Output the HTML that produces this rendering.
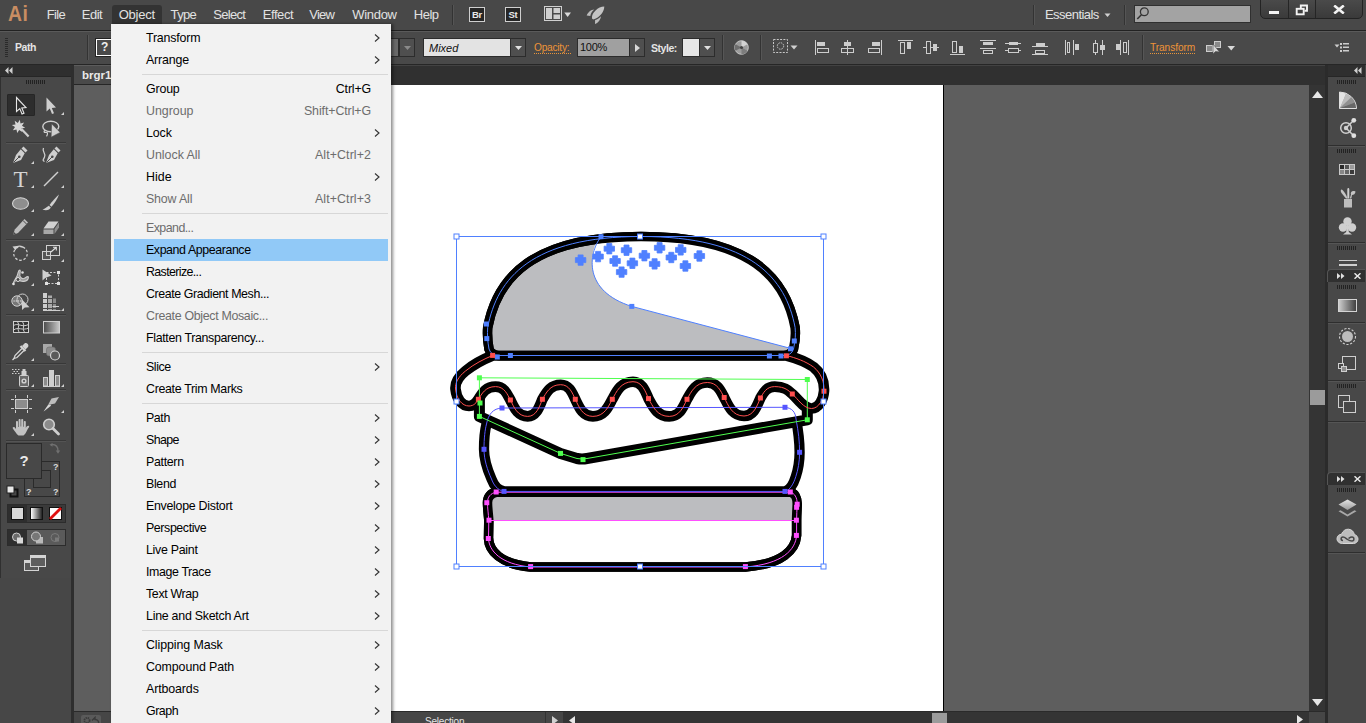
<!DOCTYPE html>
<html lang="en">
<head>
<meta charset="utf-8">
<title>brgr1 - Illustrator</title>
<style>
*{box-sizing:border-box;margin:0;padding:0}
html,body{width:1366px;height:723px;overflow:hidden;background:#5e5e5e}
body{position:relative;font-family:"Liberation Sans",sans-serif;font-size:12px;color:#e0e0e0}
.abs{position:absolute}
#menubar{left:0;top:0;width:1366px;height:30px;background:#484848}
#menubar .mi{position:absolute;top:7px;font-size:13px;color:#e2e2e2;white-space:nowrap;line-height:16px}
#ctrl{left:0;top:30px;width:1366px;height:35px;background:#494949;border-top:1px solid #222;border-bottom:1px solid #262626;box-shadow:inset 0 1px 0 #5a5a5a}
#tabbar{left:71px;top:65px;width:1257px;height:20px;background:#303030;border-top:1px solid #424242}
#tab{left:74px;top:65px;width:150px;height:20px;background:#4a4a4a;border-top:1px solid #5c5c5c;border-bottom:1px solid #262626;font-weight:bold;font-size:11.5px;color:#e8e8e8;line-height:19px;padding-left:8px}
#tools{left:0;top:65px;width:74px;height:658px;background:#484848;border-right:3px solid #2e2e2e;box-shadow:inset 1px 0 0 #303030}
#canvas{left:74px;top:85px;width:1235px;height:626px;background:#5e5e5e}
#artboard{left:391px;top:85px;width:553px;height:626px;background:#fff;border-right:1px solid #000}
#vscroll{left:1309px;top:85px;width:16px;height:626px;background:#343434}
#status{left:74px;top:711px;width:1251px;height:12px;background:#464646;border-top:1px solid #2a2a2a}
#dock{left:1325px;top:65px;width:41px;height:658px;background:#484848;border-left:3px solid #2b2b2b}
.appbox{top:7px;width:16px;height:15px;background:#262626;border:1px solid #cfcfcf;color:#e8e8e8;font-weight:bold;font-size:9.500px;line-height:13px;text-align:center;letter-spacing:-0.3px}
.vsep{top:4px;width:2px;height:25px;border-left:1px solid #333;border-right:1px solid #565656}
.ddb{height:19px;background:#4f4f4f;border:1px solid #2c2c2c;display:flex;align-items:center;justify-content:center}
.olink{font-size:10.200px;color:#ee9438;line-height:13px;height:13px;border-bottom:1px dotted #e8943a;white-space:nowrap;letter-spacing:-0.1px}
.q{color:#d8d8d8;font-weight:bold;font-size:9px;line-height:9px}
/* menu */
#menu{left:111px;top:24px;width:280px;height:699px;background:#f2f2f2;border-left:1px solid #f0f0f0;box-shadow:2px 0 3px rgba(0,0,0,.45);color:#000;font-size:12.4px}
#menu .it{position:absolute;left:2px;width:274px;height:22px;line-height:23px;padding-left:32px;white-space:nowrap}
#menu .it.dis{color:#6d6d6d}
#menu .it.hl{background:#91c9f7}
#menu .sc{position:absolute;right:17px;top:0}
#menu .ar{position:absolute;right:8px;top:6px;width:6px;height:10px}
#menu .sep{position:absolute;left:30px;width:246px;height:1px;background:#d7d7d7}
</style>
</head>
<body>
<!-- MENUBAR -->
<div id="menubar" class="abs">
  <div class="abs" style="left:8px;top:1px;font-size:22px;font-weight:bold;color:#c98d62;letter-spacing:0.6px;line-height:26px;transform:scaleX(0.88);transform-origin:0 0">Ai</div>
  <div class="abs" style="left:112px;top:5px;width:50px;height:20px;background:#333;border-radius:3px 3px 0 0"></div>
  <div class="mi" style="left:46.7px;letter-spacing:-0.61px">File</div>
  <div class="mi" style="left:81.8px;letter-spacing:-0.50px">Edit</div>
  <div class="mi" style="left:118.7px;letter-spacing:-0.23px">Object</div>
  <div class="mi" style="left:170.6px;letter-spacing:-0.65px">Type</div>
  <div class="mi" style="left:213.2px;letter-spacing:-0.69px">Select</div>
  <div class="mi" style="left:262.7px;letter-spacing:-0.42px">Effect</div>
  <div class="mi" style="left:309.2px;letter-spacing:-0.74px">View</div>
  <div class="mi" style="left:352.2px;letter-spacing:-0.29px">Window</div>
  <div class="mi" style="left:413.7px;letter-spacing:-0.44px">Help</div>

  <div class="abs" style="left:452px;top:5px;width:1px;height:20px;background:#333"></div>
  <div class="abs" style="left:453px;top:5px;width:1px;height:20px;background:#555"></div>
  <div class="abs appbox" style="left:469px">Br</div>
  <div class="abs appbox" style="left:505px">St</div>
  <svg class="abs" style="left:544px;top:6px" width="28" height="15" viewBox="0 0 28 15">
    <rect x="0.5" y="0.5" width="17" height="14" fill="#4a4a4a" stroke="#d0d0d0"/>
    <rect x="2" y="2" width="6" height="11" fill="#cfcfcf"/><rect x="9.5" y="2" width="6.5" height="5" fill="#cfcfcf"/><rect x="9.5" y="8.5" width="6.5" height="4.5" fill="#cfcfcf"/>
    <path d="M20.3 6.5 H27 L23.65 11 Z" fill="#d8d8d8"/>
  </svg>
  <svg class="abs" style="left:586px;top:5px" width="20" height="20" viewBox="0 0 20 20">
    <path d="M18.300 1.500 C12 1.500 5.500 8 6 13 C6.200 14.400 7.200 14.600 8 14.300 C13 12.500 18.200 7.500 18.300 1.500Z" fill="#c4c4c4"/>
    <path d="M8.300 4.600 C5 4.800 2 7.300 0.700 10.600 L4.300 10.900 C4.800 8.500 6.300 6.200 8.300 4.600Z" fill="#bcbcbc"/>
    <path d="M14.900 11.200 C14.900 14 12.500 17.600 9 19 L9.100 15.100 C11.500 14.300 13.500 12.800 14.900 11.200Z" fill="#bcbcbc"/>
  </svg>
  <div class="abs" style="left:1033px;top:5px;width:1px;height:20px;background:#333"></div>
  <div class="abs" style="left:1034px;top:5px;width:1px;height:20px;background:#555"></div>
  <div class="mi" style="left:1045px;letter-spacing:-0.550px">Essentials</div>
  <svg class="abs" style="left:1104px;top:13px" width="7" height="4" viewBox="0 0 7 4"><path d="M0.500 0.500H6.500L3.500 4Z" fill="#d0d0d0"/></svg>
  <div class="abs" style="left:1124px;top:5px;width:1px;height:20px;background:#333"></div>
  <div class="abs" style="left:1125px;top:5px;width:1px;height:20px;background:#555"></div>
  <div class="abs" style="left:1134px;top:5px;width:117px;height:18px;background:#a3a3a3;border:1px solid #303030"></div>
  <svg class="abs" style="left:1136px;top:6px" width="14" height="15" viewBox="0 0 14 15"><circle cx="8.300" cy="5.800" r="3.900" fill="none" stroke="#333" stroke-width="1.300"/><path d="M5.400 8.800 L1.300 13" stroke="#333" stroke-width="1.600"/></svg>
  <div class="abs" style="left:1260px;top:-1px;width:103px;height:20px;background:linear-gradient(#4a4a4a,#3a3a3a);border:1px solid #232323;border-radius:0 0 5px 5px"></div>
  <div class="abs" style="left:1288px;top:0;width:1px;height:18px;background:#252525"></div>
  <div class="abs" style="left:1315px;top:0;width:1px;height:18px;background:#252525"></div>
  <div class="abs" style="left:1269px;top:11px;width:10px;height:3px;background:#f2f2f2"></div>
  <svg class="abs" style="left:1295px;top:4px" width="14" height="12" viewBox="0 0 14 12">
    <path d="M5.800 4 V1.500 H12 V6.800 H9.500" fill="none" stroke="#f2f2f2" stroke-width="1.900"/>
    <rect x="1.700" y="4.800" width="7" height="5.500" fill="none" stroke="#f2f2f2" stroke-width="1.900"/>
  </svg>
  <svg class="abs" style="left:1333px;top:5px" width="12" height="9" viewBox="0 0 12 9"><path d="M1.200 0.500 L10.800 8.500 M10.800 0.500 L1.200 8.500" stroke="#f2f2f2" stroke-width="2.600"/></svg>

</div>
<!-- CONTROL BAR -->
<div id="ctrl" class="abs">
  <div class="abs" style="left:5px;top:7px;width:3px;height:20px;background:repeating-linear-gradient(#2a2a2a 0 1px,transparent 1px 2px)"></div>
  <div class="abs" style="left:15px;top:9px;font-weight:bold;font-size:10.5px;color:#e4e4e4;line-height:14px;letter-spacing:-0.45px">Path</div>
  <div class="abs vsep" style="left:87px"></div>
  <div class="abs" style="left:96px;top:8px;width:30px;height:17px;border:1px solid #fff;outline:1px solid #222;background:#4a4a4a;color:#eee;font-weight:bold;font-size:12px;line-height:15px;padding-left:4px">?</div>
  <div class="abs" style="left:380px;top:7px;width:19px;height:19px;background:#6a6a6a;border:1px solid #2c2c2c"></div>
  <div class="abs ddb" style="left:399px;top:7px;width:16px"><svg width="7" height="4" viewBox="0 0 7 4"><path d="M0 0H7L3.500 4Z" fill="#8a8a8a"/></svg></div>
  <div class="abs" style="left:423px;top:7px;width:88px;height:19px;background:#e3e3e3;border:1px solid #2c2c2c;color:#111;font-style:italic;font-size:11px;line-height:18px;padding-left:5px">Mixed</div>
  <div class="abs ddb" style="left:510px;top:7px;width:16px"><svg width="7" height="4" viewBox="0 0 7 4"><path d="M0 0H7L3.500 4Z" fill="#e0e0e0"/></svg></div>
  <div class="abs olink" style="left:534px;top:10px;width:37px;letter-spacing:-0.25px">Opacity:</div>
  <div class="abs" style="left:577px;top:7px;width:53px;height:19px;background:#a0a0a0;border:1px solid #2c2c2c;color:#111;font-size:11px;line-height:17px;padding-left:2px;letter-spacing:-0.3px">100%</div>
  <div class="abs ddb" style="left:629px;top:7px;width:16px"><svg width="5" height="8" viewBox="0 0 5 8"><path d="M0 0V8L5 4Z" fill="#d8d8d8"/></svg></div>
  <div class="abs" style="left:651px;top:10px;font-weight:bold;font-size:10.5px;color:#e4e4e4;line-height:14px;letter-spacing:-0.45px">Style:</div>
  <div class="abs" style="left:682px;top:7px;width:18px;height:19px;background:#e6e6e6;border:1px solid #2c2c2c"></div>
  <div class="abs ddb" style="left:699px;top:7px;width:16px"><svg width="7" height="4" viewBox="0 0 7 4"><path d="M0 0H7L3.500 4Z" fill="#e0e0e0"/></svg></div>
  <div class="abs vsep" style="left:722px"></div>
  <svg class="abs" style="left:734px;top:9px" width="15" height="15" viewBox="0 0 15 15"><circle cx="7.500" cy="7.500" r="6.800" fill="#9c9c9c" stroke="#c8c8c8" stroke-width="1"/><path d="M7.500 7.500 L7.500 0.700 A6.800 6.800 0 0 1 13.500 4.200Z" fill="#d4d4d4"/><path d="M7.500 7.500 L1.500 4.200 A6.800 6.800 0 0 0 1.500 10.800Z" fill="#6e6e6e"/><path d="M7.500 7.500 L7.500 14.300 A6.800 6.800 0 0 0 13.500 10.800Z" fill="#7d7d7d"/><circle cx="7.500" cy="7.500" r="1.600" fill="#444"/></svg>
  <div class="abs vsep" style="left:760px"></div>
  <svg class="abs" style="left:773px;top:8px" width="26" height="15" viewBox="0 0 26 15"><rect x="0.500" y="0.500" width="14" height="13" fill="none" stroke="#c8c8c8" stroke-width="1" stroke-dasharray="2 1.300"/><circle cx="7.500" cy="7" r="3.200" fill="none" stroke="#c8c8c8" stroke-width="1" stroke-dasharray="1.500 1"/><path d="M17.500 6.500H24.500L21 10.500Z" fill="#d0d0d0"/></svg>
  <svg class="abs" style="left:815px;top:9px" width="14" height="15" viewBox="0 0 14 15"><path d="M0.5 0L0.5 15" stroke="#cdcdcd" stroke-width="1"/><rect x="2" y="2" width="8" height="4" fill="#cdcdcd"/><rect x="2.5" y="8.5" width="11" height="4" fill="none" stroke="#cdcdcd"/></svg>
  <svg class="abs" style="left:841px;top:9px" width="13" height="15" viewBox="0 0 13 15"><path d="M6.5 0L6.5 15" stroke="#cdcdcd" stroke-width="1"/><rect x="3" y="2" width="7" height="4" fill="#cdcdcd"/><rect x="0.5" y="8.5" width="12" height="4" fill="none" stroke="#cdcdcd"/></svg>
  <svg class="abs" style="left:868px;top:9px" width="14" height="15" viewBox="0 0 14 15"><path d="M13.5 0L13.5 15" stroke="#cdcdcd" stroke-width="1"/><rect x="4" y="2" width="8" height="4" fill="#cdcdcd"/><rect x="0.5" y="8.5" width="11" height="4" fill="none" stroke="#cdcdcd"/></svg>
  <svg class="abs" style="left:898px;top:9px" width="15" height="15" viewBox="0 0 15 15"><path d="M0 0.5L15 0.5" stroke="#cdcdcd" stroke-width="1"/><rect x="2.5" y="2.5" width="4" height="11" fill="none" stroke="#cdcdcd"/><rect x="9" y="2" width="4" height="7" fill="#cdcdcd"/></svg>
  <svg class="abs" style="left:923px;top:9px" width="16" height="15" viewBox="0 0 16 15"><path d="M0 7.5L16 7.5" stroke="#cdcdcd" stroke-width="1"/><rect x="3.500" y="1.500" width="4" height="12" fill="#474747" stroke="#cdcdcd"/><rect x="10" y="4" width="4" height="7" fill="#cdcdcd"/></svg>
  <svg class="abs" style="left:950px;top:9px" width="15" height="15" viewBox="0 0 15 15"><path d="M0 14.5L15 14.5" stroke="#cdcdcd" stroke-width="1"/><rect x="2.5" y="1.5" width="4" height="11" fill="none" stroke="#cdcdcd"/><rect x="9" y="6" width="4" height="7" fill="#cdcdcd"/></svg>
  <svg class="abs" style="left:980px;top:9px" width="16" height="15" viewBox="0 0 16 15"><path d="M0 0.5L16 0.5" stroke="#cdcdcd" stroke-width="1"/><rect x="3" y="2" width="10" height="3" fill="#cdcdcd"/><path d="M0 8.5L16 8.5" stroke="#cdcdcd" stroke-width="1"/><rect x="3.5" y="10.5" width="9" height="3" fill="none" stroke="#cdcdcd"/></svg>
  <svg class="abs" style="left:1005px;top:9px" width="16" height="15" viewBox="0 0 16 15"><path d="M0 3.5L16 3.5" stroke="#cdcdcd" stroke-width="1"/><rect x="4" y="2" width="9" height="3" fill="#cdcdcd"/><path d="M0 10.5L16 10.5" stroke="#cdcdcd" stroke-width="1"/><rect x="3.500" y="8.500" width="10" height="4" fill="#474747" stroke="#cdcdcd"/></svg>
  <svg class="abs" style="left:1032px;top:9px" width="16" height="15" viewBox="0 0 16 15"><path d="M0 6.5L16 6.5" stroke="#cdcdcd" stroke-width="1"/><rect x="4" y="3" width="9" height="3" fill="#cdcdcd"/><path d="M0 14.5L16 14.5" stroke="#cdcdcd" stroke-width="1"/><rect x="3.5" y="10.5" width="9" height="3" fill="none" stroke="#cdcdcd"/></svg>
  <svg class="abs" style="left:1065px;top:9px" width="14" height="15" viewBox="0 0 14 15"><path d="M0.5 0L0.5 15" stroke="#cdcdcd" stroke-width="1"/><rect x="2.5" y="2.5" width="2" height="10" fill="none" stroke="#cdcdcd"/><path d="M8.5 0L8.5 15" stroke="#cdcdcd" stroke-width="1"/><rect x="10" y="4" width="4" height="6" fill="#cdcdcd"/></svg>
  <svg class="abs" style="left:1092px;top:9px" width="14" height="15" viewBox="0 0 14 15"><path d="M3.5 0L3.5 15" stroke="#cdcdcd" stroke-width="1"/><rect x="1.500" y="3.500" width="4" height="9" fill="#474747" stroke="#cdcdcd"/><path d="M10.5 0L10.5 15" stroke="#cdcdcd" stroke-width="1"/><rect x="8" y="5" width="5" height="5" fill="#cdcdcd"/></svg>
  <svg class="abs" style="left:1115px;top:9px" width="14" height="15" viewBox="0 0 14 15"><path d="M5.5 0L5.5 15" stroke="#cdcdcd" stroke-width="1"/><rect x="1" y="4" width="4" height="6" fill="#cdcdcd"/><path d="M13.5 0L13.5 15" stroke="#cdcdcd" stroke-width="1"/><rect x="8.5" y="2.5" width="3" height="10" fill="none" stroke="#cdcdcd"/></svg>
  <div class="abs vsep" style="left:1142px"></div>
  <div class="abs olink" style="left:1150px;top:10px;width:45px">Transform</div>
  <svg class="abs" style="left:1205px;top:9px" width="31" height="15" viewBox="0 0 31 15"><rect x="1.500" y="5.500" width="6" height="6" fill="#8a8a8a" stroke="#cdcdcd"/><rect x="9.500" y="1.500" width="6" height="6" fill="#8a8a8a" stroke="#cdcdcd"/><path d="M8 4 L8 14 L10.500 11.500 L14.500 12 Z" fill="#d8d8d8" stroke="#474747" stroke-width="0.600"/><path d="M22.500 6H30L26.250 10.500Z" fill="#d8d8d8"/></svg>
  <svg class="abs" style="left:1334px;top:11px" width="16" height="11" viewBox="0 0 16 11"><path d="M0.500 2.500H5.500L3 5.500Z" fill="#cdcdcd"/><rect x="6" y="1" width="2" height="2" fill="#cdcdcd"/><rect x="9" y="1" width="6" height="1.500" fill="#cdcdcd"/><rect x="6" y="4.500" width="2" height="2" fill="#cdcdcd"/><rect x="9" y="4.500" width="6" height="1.500" fill="#cdcdcd"/><rect x="6" y="8" width="2" height="2" fill="#cdcdcd"/><rect x="9" y="8" width="6" height="1.500" fill="#cdcdcd"/></svg>
</div>
<div id="tabbar" class="abs"></div>
<div id="tab" class="abs">brgr1</div>
<div id="canvas" class="abs"></div>
<div id="artboard" class="abs"></div>
<!--ART-->
<svg class="abs" style="left:0;top:0" width="1366" height="723" viewBox="0 0 1366 723">
<defs><clipPath id="cd"><path d="M489 349 C487.500 341 487.200 334 487.700 327.500 C497 278 532 236.500 641 236.500 C750.800 236.500 785.800 278 795.100 327.500 C795.800 334 795.300 341 793.500 349 Q791.500 355.500 783.500 355.500 L499 355.500 Q491 355.500 489 349 Z"/></clipPath><clipPath id="cb"><path d="M496.200 492.200 L790.300 492.200 C794.500 493.200 797.300 497.500 797.200 504.200 C797 510 796.600 515 796.600 520.200 L796.600 535.400 C795.500 549.500 783 564 745.400 567 L530.600 567 C500 564 489 550.500 488.500 538.500 L488.800 520.200 C488.400 514 487.500 508 487.500 502.700 C487.500 497 490.500 493.200 496.200 492.200 Z"/></clipPath></defs>
<path d="M496.200 492.200 L790.300 492.200 C794.500 493.200 797.300 497.500 797.200 504.200 C797 510 796.600 515 796.600 520.200 L796.600 535.400 C795.500 549.500 783 564 745.400 567 L530.600 567 C500 564 489 550.500 488.500 538.500 L488.800 520.200 C488.400 514 487.500 508 487.500 502.700 C487.500 497 490.500 493.200 496.200 492.200 Z" fill="#fff" stroke="#000" stroke-width="9.5" stroke-linejoin="round"/>
<rect x="480" y="485" width="330" height="35.800" fill="#bcbdc0" clip-path="url(#cb)"/>
<path d="M496.200 492.200 L790.300 492.200 C794.500 493.200 797.300 497.500 797.200 504.200 C797 510 796.600 515 796.600 520.200 L796.600 535.400 C795.500 549.500 783 564 745.400 567 L530.600 567 C500 564 489 550.500 488.500 538.500 L488.800 520.200 C488.400 514 487.500 508 487.500 502.700 C487.500 497 490.500 493.200 496.200 492.200 Z" fill="none" stroke="#000" stroke-width="9.5" stroke-linejoin="round"/>
<path d="M502 408 L785 407.300 C792 408 795.500 412 796 419 C798.500 432 799.600 442 799.600 452.300 C799.600 462 798 470 795.800 476.600 C793.500 484 790 490 785 491.400 L504 491.400 C497 490 493.500 484.500 491.500 479 C487.500 470 484 460 484 449.300 C484 438 485 430 486.500 424 C488.500 414 493 408.500 502 408 Z" fill="#fff" stroke="#000" stroke-width="10.300" stroke-linejoin="round"/>
<path d="M479.400 377.800 L807.300 379.500 L807.300 419.800 L587 458.500 Q582 459.500 577 458.500 L560.500 453.400 L479.400 416.400 Z" fill="#fff" stroke="#000" stroke-width="11" stroke-linejoin="round"/>
<path d="M492.600 355.500 C484 359 474 364 465.500 371 C458 377 455 383 455.500 389 C456.500 399 462 406 469 406 C474 406 476.500 402.500 478.400 399.300 C481.8 394.0 485.2 386.6 495.5 386.6 C504.4 386.6 507.4 394.4 510.4 400 C513.9 406.9 517.3 416.4 527.7 416.4 C536.5 416.4 539.5 406.5 542.4 399.3 C546.1 393.2 549.7 384.7 560.7 384.7 C569.5 384.7 572.4 393.2 575.3 399.3 C578.8 406.5 582.3 416.4 592.9 416.4 C604.5 416.4 608.4 406.5 612.3 399.3 C616.4 391.9 620.6 381.7 633 381.7 C642.3 381.7 645.4 391.5 648.5 398.6 C652.7 406.1 656.8 416.4 669.3 416.4 C679.9 416.4 683.5 406.5 687 399.3 C691.1 392.2 695.1 382.5 707.3 382.5 C717.4 382.5 720.8 391.2 724.2 397.5 C728.2 405.3 732.1 416.0 744 416 C753.8 416.0 757.1 405.6 760.4 398 C763.3 393.2 766.1 386.6 774.7 386.6 C785.3 386.6 788.8 390.9 792.3 394 C798 399 803.500 408.500 811.500 408.500 C819 408.500 823.500 399 824 391.200 C824.500 382 821 373 813.500 367 C805 361 796 358 786.400 355.500 Z" fill="#fff" stroke="#000" stroke-width="10.600" stroke-linejoin="round"/>
<path d="M489 349 C487.500 341 487.200 334 487.700 327.500 C497 278 532 236.500 641 236.500 C750.800 236.500 785.800 278 795.100 327.500 C795.800 334 795.300 341 793.500 349 Q791.500 355.500 783.500 355.500 L499 355.500 Q491 355.500 489 349 Z" fill="#bcbdc0" stroke="#000" stroke-width="9.5" stroke-linejoin="round"/>
<path d="M601 232 C588 254 583 291 631.800 306.400 L793 349 L810 349 L810 225 Z" fill="#fff" clip-path="url(#cd)"/>
<path d="M489 349 C487.500 341 487.200 334 487.700 327.500 C497 278 532 236.500 641 236.500 C750.800 236.500 785.800 278 795.100 327.500 C795.800 334 795.300 341 793.500 349 Q791.500 355.500 783.500 355.500 L499 355.500 Q491 355.500 489 349 Z" fill="none" stroke="#000" stroke-width="9.5" stroke-linejoin="round"/>
<path d="M496.200 492.200 L790.300 492.200 C794.500 493.200 797.300 497.500 797.200 504.200 C797 510 796.600 515 796.600 520.200 L796.600 535.400 C795.500 549.500 783 564 745.400 567 L530.600 567 C500 564 489 550.500 488.500 538.500 L488.800 520.200 C488.400 514 487.500 508 487.500 502.700 C487.500 497 490.500 493.200 496.200 492.200 Z" fill="none" stroke="#ff4fff" stroke-width="1"/><path d="M489 520.500 H796.400" stroke="#ff4fff" stroke-width="1"/>
<path d="M502 408 L785 407.300 C792 408 795.500 412 796 419 C798.500 432 799.600 442 799.600 452.300 C799.600 462 798 470 795.800 476.600 C793.500 484 790 490 785 491.400 L504 491.400 C497 490 493.500 484.500 491.500 479 C487.500 470 484 460 484 449.300 C484 438 485 430 486.500 424 C488.500 414 493 408.500 502 408 Z" fill="none" stroke="#5555ff" stroke-width="1"/>
<path d="M479.400 377.800 L807.300 379.500 L807.300 419.800 L587 458.500 Q582 459.500 577 458.500 L560.500 453.400 L479.400 416.400 Z" fill="none" stroke="#4fff4f" stroke-width="1"/>
<path d="M492.600 355.500 C484 359 474 364 465.500 371 C458 377 455 383 455.500 389 C456.500 399 462 406 469 406 C474 406 476.500 402.500 478.400 399.300 C481.8 394.0 485.2 386.6 495.5 386.6 C504.4 386.6 507.4 394.4 510.4 400 C513.9 406.9 517.3 416.4 527.7 416.4 C536.5 416.4 539.5 406.5 542.4 399.3 C546.1 393.2 549.7 384.7 560.7 384.7 C569.5 384.7 572.4 393.2 575.3 399.3 C578.8 406.5 582.3 416.4 592.9 416.4 C604.5 416.4 608.4 406.5 612.3 399.3 C616.4 391.9 620.6 381.7 633 381.7 C642.3 381.7 645.4 391.5 648.5 398.6 C652.7 406.1 656.8 416.4 669.3 416.4 C679.9 416.4 683.5 406.5 687 399.3 C691.1 392.2 695.1 382.5 707.3 382.5 C717.4 382.5 720.8 391.2 724.2 397.5 C728.2 405.3 732.1 416.0 744 416 C753.8 416.0 757.1 405.6 760.4 398 C763.3 393.2 766.1 386.6 774.7 386.6 C785.3 386.6 788.8 390.9 792.3 394 C798 399 803.500 408.500 811.500 408.500 C819 408.500 823.500 399 824 391.200 C824.500 382 821 373 813.500 367 C805 361 796 358 786.400 355.500 Z" fill="none" stroke="#ff4f4f" stroke-width="1"/>
<path d="M489 349 C487.500 341 487.200 334 487.700 327.500 C497 278 532 236.500 641 236.500 C750.800 236.500 785.800 278 795.100 327.500 C795.800 334 795.300 341 793.500 349 Q791.500 355.500 783.500 355.500 L499 355.500 Q491 355.500 489 349 Z" fill="none" stroke="#4f80ff" stroke-width="1"/>
<path d="M601 236.700 C588 254 583 291 631.800 306.400 L791 348.500" fill="none" stroke="#4f80ff" stroke-width="1"/>
<path d="M578.1 254.9h5v2.700h2.700v5h-2.700v2.700h-5v-2.700h-2.700v-5h2.700z" fill="#4f80ff" stroke="#4f80ff" stroke-width="0.800" stroke-linejoin="round"/>
<path d="M595.6 251.4h5v2.700h2.700v5h-2.700v2.700h-5v-2.700h-2.700v-5h2.700z" fill="#4f80ff" stroke="#4f80ff" stroke-width="0.800" stroke-linejoin="round"/>
<path d="M606.8 243.5h5v2.700h2.700v5h-2.700v2.700h-5v-2.700h-2.700v-5h2.700z" fill="#4f80ff" stroke="#4f80ff" stroke-width="0.800" stroke-linejoin="round"/>
<path d="M612.6 255.8h5v2.700h2.700v5h-2.700v2.700h-5v-2.700h-2.700v-5h2.700z" fill="#4f80ff" stroke="#4f80ff" stroke-width="0.800" stroke-linejoin="round"/>
<path d="M619.1 266.9h5v2.700h2.700v5h-2.700v2.700h-5v-2.700h-2.700v-5h2.700z" fill="#4f80ff" stroke="#4f80ff" stroke-width="0.800" stroke-linejoin="round"/>
<path d="M624.0 245.0h5v2.700h2.700v5h-2.700v2.700h-5v-2.700h-2.700v-5h2.700z" fill="#4f80ff" stroke="#4f80ff" stroke-width="0.800" stroke-linejoin="round"/>
<path d="M629.9 258.1h5v2.700h2.700v5h-2.700v2.700h-5v-2.700h-2.700v-5h2.700z" fill="#4f80ff" stroke="#4f80ff" stroke-width="0.800" stroke-linejoin="round"/>
<path d="M641.9 250.5h5v2.700h2.700v5h-2.700v2.700h-5v-2.700h-2.700v-5h2.700z" fill="#4f80ff" stroke="#4f80ff" stroke-width="0.800" stroke-linejoin="round"/>
<path d="M652.1 258.7h5v2.700h2.700v5h-2.700v2.700h-5v-2.700h-2.700v-5h2.700z" fill="#4f80ff" stroke="#4f80ff" stroke-width="0.800" stroke-linejoin="round"/>
<path d="M657.1 242.6h5v2.700h2.700v5h-2.700v2.700h-5v-2.700h-2.700v-5h2.700z" fill="#4f80ff" stroke="#4f80ff" stroke-width="0.800" stroke-linejoin="round"/>
<path d="M668.8 252.3h5v2.700h2.700v5h-2.700v2.700h-5v-2.700h-2.700v-5h2.700z" fill="#4f80ff" stroke="#4f80ff" stroke-width="0.800" stroke-linejoin="round"/>
<path d="M678.2 244.7h5v2.700h2.700v5h-2.700v2.700h-5v-2.700h-2.700v-5h2.700z" fill="#4f80ff" stroke="#4f80ff" stroke-width="0.800" stroke-linejoin="round"/>
<path d="M682.9 260.8h5v2.700h2.700v5h-2.700v2.700h-5v-2.700h-2.700v-5h2.700z" fill="#4f80ff" stroke="#4f80ff" stroke-width="0.800" stroke-linejoin="round"/>
<path d="M696.9 250.8h5v2.700h2.700v5h-2.700v2.700h-5v-2.700h-2.700v-5h2.700z" fill="#4f80ff" stroke="#4f80ff" stroke-width="0.800" stroke-linejoin="round"/>
<rect x="494.8" y="354.5" width="5" height="5" fill="#4f80ff"/>
<rect x="507.9" y="353.0" width="5" height="5" fill="#4f80ff"/>
<rect x="483.8" y="321.5" width="5" height="5" fill="#4f80ff"/>
<rect x="484.3" y="336.1" width="5" height="5" fill="#4f80ff"/>
<rect x="598.5" y="234.2" width="5" height="5" fill="#4f80ff"/>
<rect x="791.8" y="338.5" width="5" height="5" fill="#4f80ff"/>
<rect x="788.0" y="346.3" width="5" height="5" fill="#4f80ff"/>
<rect x="766.9" y="353.5" width="5" height="5" fill="#4f80ff"/>
<rect x="778.5" y="353.5" width="5" height="5" fill="#4f80ff"/>
<rect x="629.3" y="303.9" width="5" height="5" fill="#4f80ff"/>
<rect x="490.1" y="352.9" width="5" height="5" fill="#ff4f4f"/>
<rect x="475.9" y="396.8" width="5" height="5" fill="#ff4f4f"/>
<rect x="507.9" y="397.5" width="5" height="5" fill="#ff4f4f"/>
<rect x="539.9" y="396.8" width="5" height="5" fill="#ff4f4f"/>
<rect x="572.8" y="396.8" width="5" height="5" fill="#ff4f4f"/>
<rect x="609.8" y="396.8" width="5" height="5" fill="#ff4f4f"/>
<rect x="646.0" y="396.1" width="5" height="5" fill="#ff4f4f"/>
<rect x="684.5" y="396.8" width="5" height="5" fill="#ff4f4f"/>
<rect x="721.7" y="395.0" width="5" height="5" fill="#ff4f4f"/>
<rect x="757.9" y="395.5" width="5" height="5" fill="#ff4f4f"/>
<rect x="789.8" y="391.5" width="5" height="5" fill="#ff4f4f"/>
<rect x="821.5" y="388.7" width="5" height="5" fill="#ff4f4f"/>
<rect x="783.9" y="353.3" width="5" height="5" fill="#ff4f4f"/>
<rect x="476.9" y="375.3" width="5" height="5" fill="#4fff4f"/>
<rect x="804.8" y="377.0" width="5" height="5" fill="#4fff4f"/>
<rect x="804.8" y="417.3" width="5" height="5" fill="#4fff4f"/>
<rect x="580.5" y="457.1" width="5" height="5" fill="#4fff4f"/>
<rect x="558.0" y="450.9" width="5" height="5" fill="#4fff4f"/>
<rect x="476.9" y="413.9" width="5" height="5" fill="#4fff4f"/>
<rect x="477.5" y="400.5" width="5" height="5" fill="#4fff4f"/>
<rect x="499.5" y="405.5" width="5" height="5" fill="#5555ff"/>
<rect x="782.5" y="404.8" width="5" height="5" fill="#5555ff"/>
<rect x="797.1" y="449.8" width="5" height="5" fill="#5555ff"/>
<rect x="481.5" y="446.8" width="5" height="5" fill="#5555ff"/>
<rect x="501.5" y="488.9" width="5" height="5" fill="#5555ff"/>
<rect x="782.5" y="488.9" width="5" height="5" fill="#5555ff"/>
<rect x="493.7" y="489.5" width="5" height="5" fill="#ff4fff"/>
<rect x="787.8" y="489.5" width="5" height="5" fill="#ff4fff"/>
<rect x="484.3" y="500.2" width="5" height="5" fill="#ff4fff"/>
<rect x="486.5" y="517.7" width="5" height="5" fill="#ff4fff"/>
<rect x="485.8" y="536.0" width="5" height="5" fill="#ff4fff"/>
<rect x="528.1" y="564.1" width="5" height="5" fill="#ff4fff"/>
<rect x="742.9" y="564.1" width="5" height="5" fill="#ff4fff"/>
<rect x="793.9" y="532.9" width="5" height="5" fill="#ff4fff"/>
<rect x="793.9" y="517.7" width="5" height="5" fill="#ff4fff"/>
<rect x="794.7" y="501.7" width="5" height="5" fill="#ff4fff"/>
<rect x="794.1" y="504.8" width="5" height="5" fill="#ff4fff"/>
<rect x="456.500" y="236.500" width="367" height="330" fill="none" stroke="#4f80ff" stroke-width="1"/>
<rect x="454.0" y="234.0" width="5" height="5" fill="#fff" stroke="#4f80ff" stroke-width="1"/>
<rect x="454.0" y="399.0" width="5" height="5" fill="#fff" stroke="#4f80ff" stroke-width="1"/>
<rect x="454.0" y="564.0" width="5" height="5" fill="#fff" stroke="#4f80ff" stroke-width="1"/>
<rect x="637.5" y="234.0" width="5" height="5" fill="#fff" stroke="#4f80ff" stroke-width="1"/>
<rect x="637.5" y="564.0" width="5" height="5" fill="#fff" stroke="#4f80ff" stroke-width="1"/>
<rect x="821.0" y="234.0" width="5" height="5" fill="#fff" stroke="#4f80ff" stroke-width="1"/>
<rect x="821.0" y="399.0" width="5" height="5" fill="#fff" stroke="#4f80ff" stroke-width="1"/>
<rect x="821.0" y="564.0" width="5" height="5" fill="#fff" stroke="#4f80ff" stroke-width="1"/>
</svg>
<!--/ART-->
<div id="vscroll" class="abs"><svg class="abs" style="left:3px;top:6px" width="11" height="7" viewBox="0 0 11 7"><path d="M5.500 0L11 7H0Z" fill="#e6e6e6"/></svg><div class="abs" style="left:1px;top:305px;width:15px;height:15px;background:#9b9b9b"></div><svg class="abs" style="left:3px;top:614px" width="11" height="7" viewBox="0 0 11 7"><path d="M0 0H11L5.500 7Z" fill="#e6e6e6"/></svg></div>
<div id="status" class="abs"><div class="abs" style="left:7px;top:3px;width:20px;height:12px;background:#5a5a5a;border-radius:2px"></div><svg class="abs" style="left:9px;top:4px" width="17" height="8" viewBox="0 0 17 8"><circle cx="4" cy="4.500" r="2.600" fill="none" stroke="#3a3a3a" stroke-width="1.800" stroke-dasharray="1.400 0.700"/><path d="M9 4.500 L12 1.500 V3.500 C15 3.500 16 5.500 15.500 8" fill="none" stroke="#3a3a3a" stroke-width="1.400"/></svg><div class="abs" style="left:351px;top:4px;font-size:10px;color:#e4e4e4;line-height:12px;letter-spacing:-0.2px">Selection</div><div class="abs" style="left:471px;top:0;width:1px;height:12px;background:#333"></div><svg class="abs" style="left:478px;top:4px" width="6" height="9" viewBox="0 0 6 9"><path d="M0 0V9L6 4.500Z" fill="#d0d0d0"/></svg><div class="abs" style="left:489px;top:0;width:746px;height:12px;background:#343434"></div><svg class="abs" style="left:495px;top:4px" width="6" height="9" viewBox="0 0 6 9"><path d="M6 0V9L0 4.500Z" fill="#e6e6e6"/></svg><div class="abs" style="left:858px;top:1px;width:15px;height:11px;background:#9b9b9b"></div><svg class="abs" style="left:1223px;top:3px" width="6" height="9" viewBox="0 0 6 9"><path d="M0 0V9L6 4.500Z" fill="#e6e6e6"/></svg></div>
<div id="tools" class="abs">
<div class="abs" style="left:0;top:0;width:71px;height:12px;background:#2f2f2f;border-bottom:1px solid #262626"></div>
<svg class="abs" style="left:5px;top:2px" width="8" height="7" viewBox="0 0 8 7"><path d="M3.500 0V7L0 3.500ZM7.500 0V7L4 3.500Z" fill="#d0d0d0"/></svg>
<div class="abs" style="left:26px;top:15px;width:20px;height:4px;background:repeating-linear-gradient(90deg,#222 0 1px,transparent 1px 2px)"></div>
<div class="abs" style="left:7px;top:29px;width:28px;height:22px;background:#2d2d2d;border:1px solid #262626;border-radius:1px"></div>
<div class="abs" style="left:6px;top:77px;width:60px;height:1px;background:#383838"></div><div class="abs" style="left:6px;top:78px;width:60px;height:1px;background:#545454"></div>
<div class="abs" style="left:6px;top:174px;width:60px;height:1px;background:#383838"></div><div class="abs" style="left:6px;top:175px;width:60px;height:1px;background:#545454"></div>
<div class="abs" style="left:6px;top:249px;width:60px;height:1px;background:#383838"></div><div class="abs" style="left:6px;top:250px;width:60px;height:1px;background:#545454"></div>
<div class="abs" style="left:6px;top:298px;width:60px;height:1px;background:#383838"></div><div class="abs" style="left:6px;top:299px;width:60px;height:1px;background:#545454"></div>
<div class="abs" style="left:6px;top:324px;width:60px;height:1px;background:#383838"></div><div class="abs" style="left:6px;top:325px;width:60px;height:1px;background:#545454"></div>
<div class="abs" style="left:6px;top:375px;width:60px;height:1px;background:#383838"></div><div class="abs" style="left:6px;top:376px;width:60px;height:1px;background:#545454"></div>
<svg class="abs" style="left:10px;top:30px;overflow:visible" width="22" height="22" viewBox="0 0 22 22"><path d="M6.500 2.500 L6.500 16.500 L9.800 13.600 L12 19 L14 18.200 L11.800 12.900 L16 12.500 Z" fill="#2d2d2d" stroke="#e6e6e6" stroke-width="1.100" stroke-linejoin="miter"/></svg>
<svg class="abs" style="left:40px;top:30px;overflow:visible" width="22" height="22" viewBox="0 0 22 22"><path d="M6.500 2.500 L6.500 16.500 L9.800 13.600 L12 19 L14 18.200 L11.800 12.900 L16 12.500 Z" fill="#cfcfcf"/><path d="M22 20.5V23.5H19Z" fill="#d0d0d0" transform="translate(2,-3.500)"/></svg>
<svg class="abs" style="left:10px;top:54px;overflow:visible" width="22" height="22" viewBox="0 0 22 22"><path d="M11.500 10 L18.600 17.500" stroke="#cfcfcf" stroke-width="2.200"/><path d="M9.8 0.7 L10.5 4.4 L14.1 3.6 L12.0 6.7 L15.2 8.7 L11.5 9.4 L12.3 13.0 L9.2 10.9 L7.2 14.1 L6.5 10.4 L2.9 11.2 L5.0 8.1 L1.8 6.1 L5.5 5.4 L4.7 1.8 L7.8 3.9Z" fill="#d6d6d6"/></svg>
<svg class="abs" style="left:40px;top:54px;overflow:visible" width="22" height="22" viewBox="0 0 22 22"><ellipse cx="10.800" cy="7.500" rx="8" ry="5.300" fill="none" stroke="#cfcfcf" stroke-width="1.400"/><path d="M5.500 11.300 C3.300 11.800 3.800 14 5.800 13.400 C8 12.800 7.800 15.500 6.500 17.300" fill="none" stroke="#cfcfcf" stroke-width="1.200"/><path d="M11.600 4.800 L20.200 13.400 L11.100 18.200 Z" fill="#cfcfcf" stroke="#484848" stroke-width="0.600"/></svg>
<svg class="abs" style="left:10px;top:79px;overflow:visible" width="22" height="22" viewBox="0 0 22 22"><path d="M13.500 2.500 L17.500 6.500 L15.500 8.500 L11.500 4.500 Z" fill="#cfcfcf"/><path d="M10.800 5.300 L14.700 9.200 L11 16 L3 19 L6 11 Z" fill="#cfcfcf"/><path d="M3.500 18.500 L9 13" stroke="#484848" stroke-width="1"/><circle cx="9.300" cy="12.700" r="1.300" fill="#484848"/><path d="M22 20.5V23.5H19Z" fill="#d0d0d0" transform="translate(2,-3.500)"/></svg>
<svg class="abs" style="left:40px;top:79px;overflow:visible" width="26" height="22" viewBox="0 0 26 22"><g transform="translate(3,0)"><path d="M13.500 2.500 L17.500 6.500 L15.500 8.500 L11.500 4.500 Z" fill="#cfcfcf"/><path d="M10.800 5.300 L14.700 9.200 L11 16 L3 19 L6 11 Z" fill="#cfcfcf"/><path d="M3.500 18.500 L9 13" stroke="#484848" stroke-width="1"/><circle cx="9.300" cy="12.700" r="1.300" fill="#484848"/></g><path d="M3.500 4 C1.500 8 6.500 9 4.500 13 C3.500 15.500 2 16.500 4.500 17.500" fill="none" stroke="#cfcfcf" stroke-width="1.300"/></svg>
<svg class="abs" style="left:10px;top:103px;overflow:visible" width="22" height="22" viewBox="0 0 22 22"><text x="10.500" y="19" font-family="Liberation Serif,serif" font-size="23" fill="#d4d4d4" text-anchor="middle">T</text><path d="M22 20.5V23.5H19Z" fill="#d0d0d0" transform="translate(2,-3.500)"/></svg>
<svg class="abs" style="left:40px;top:103px;overflow:visible" width="22" height="22" viewBox="0 0 22 22"><path d="M4 18 L18 4" stroke="#cfcfcf" stroke-width="1.400"/><path d="M22 20.5V23.5H19Z" fill="#d0d0d0" transform="translate(2,-3.500)"/></svg>
<svg class="abs" style="left:10px;top:127px;overflow:visible" width="22" height="22" viewBox="0 0 22 22"><ellipse cx="10.500" cy="11.500" rx="8" ry="5.800" fill="#8e8e8e" stroke="#d4d4d4" stroke-width="1.100"/><path d="M22 20.5V23.5H19Z" fill="#d0d0d0" transform="translate(2,-3.500)"/></svg>
<svg class="abs" style="left:40px;top:127px;overflow:visible" width="22" height="22" viewBox="0 0 22 22"><path d="M19 2.500 C16 5 12 9.500 9.500 13 L11.500 14.800 C14.500 11.500 17.500 6.500 19 2.500 Z" fill="#cfcfcf"/><path d="M8.800 13.800 L10.800 15.600 C10 18 6 19 2.500 17.500 C5.500 17 6.500 15 8.800 13.800 Z" fill="#cfcfcf"/><path d="M22 20.5V23.5H19Z" fill="#d0d0d0" transform="translate(2,-3.500)"/></svg>
<svg class="abs" style="left:10px;top:151px;overflow:visible" width="22" height="22" viewBox="0 0 22 22"><path d="M14.500 3 L18 6.500 L8 17 L3 19 L4.800 13.500 Z" fill="#bdbdbd"/><path d="M13 4.500 L16.500 8" stroke="#484848" stroke-width="1"/><path d="M3 19 L4 16 L6 18 Z" fill="#484848"/><path d="M22 20.5V23.5H19Z" fill="#d0d0d0" transform="translate(2,-3.500)"/></svg>
<svg class="abs" style="left:40px;top:151px;overflow:visible" width="22" height="22" viewBox="0 0 22 22"><path d="M8.500 5.500 L18.500 5.500 L13.500 12.500 L3.500 12.500 Z" fill="#d2d2d2"/><path d="M3.500 13.500 L13.500 13.500 L13.500 18 L3.500 18 Z" fill="#a8a8a8"/><path d="M14.500 13 L19 6.500 L19 11.500 L14.500 18 Z" fill="#8c8c8c"/><path d="M22 20.5V23.5H19Z" fill="#d0d0d0" transform="translate(2,-3.500)"/></svg>
<svg class="abs" style="left:10px;top:177px;overflow:visible" width="22" height="22" viewBox="0 0 22 22"><circle cx="10.500" cy="11.500" r="6.800" fill="none" stroke="#cfcfcf" stroke-width="1.200" stroke-dasharray="2.600 1.800" transform="rotate(-70 10.500 11.500)"/><path d="M5 6 A6.800 6.800 0 0 1 13 5.200" fill="none" stroke="#cfcfcf" stroke-width="1.300"/><path d="M2.500 4.500 L7.500 4 L5.500 8.500 Z" fill="#cfcfcf"/><path d="M22 20.5V23.5H19Z" fill="#d0d0d0" transform="translate(2,-3.500)"/></svg>
<svg class="abs" style="left:40px;top:177px;overflow:visible" width="22" height="22" viewBox="0 0 22 22"><rect x="2.500" y="9.500" width="8" height="8" fill="#555" stroke="#cfcfcf"/><rect x="6.500" y="3.500" width="13" height="10" fill="none" stroke="#cfcfcf"/><path d="M11 10 L16 5.500 M13 5.200 H16.300 V8.500" fill="none" stroke="#e0e0e0" stroke-width="1.100"/><path d="M22 20.5V23.5H19Z" fill="#d0d0d0" transform="translate(2,-3.500)"/></svg>
<svg class="abs" style="left:10px;top:201px;overflow:visible" width="22" height="22" viewBox="0 0 22 22"><path d="M3 18 C5 12 7 12 8 7 C9 3 11 3 10 7 C9 11 12 14 15 12 C18 10 19 10 18 13 C16 17 10 15 8 14" fill="#9a9a9a" stroke="#cfcfcf" stroke-width="1.100"/><circle cx="8" cy="13.500" r="2" fill="#484848" stroke="#e0e0e0" stroke-width="1"/><circle cx="3.500" cy="18" r="1.300" fill="#e0e0e0"/><circle cx="12.500" cy="6.500" r="1.300" fill="#e0e0e0"/><path d="M22 20.5V23.5H19Z" fill="#d0d0d0" transform="translate(2,-3.500)"/></svg>
<svg class="abs" style="left:40px;top:201px;overflow:visible" width="22" height="22" viewBox="0 0 22 22"><rect x="6.500" y="6.500" width="12" height="11" fill="none" stroke="#cfcfcf" stroke-dasharray="2 1.500"/><rect x="17" y="5" width="3" height="3" fill="#e0e0e0"/><rect x="17" y="16" width="3" height="3" fill="#e0e0e0"/><rect x="5" y="16" width="3" height="3" fill="#e0e0e0"/><path d="M2.500 3.500 L2.500 14.500 L5.300 12 L11.500 9.500 Z" fill="#cfcfcf"/></svg>
<svg class="abs" style="left:10px;top:226px;overflow:visible" width="22" height="22" viewBox="0 0 22 22"><circle cx="7" cy="10" r="5.200" fill="#777" stroke="#cfcfcf"/><circle cx="12.500" cy="8.500" r="5.500" fill="none" stroke="#cfcfcf"/><path d="M3.500 10 H12" stroke="#f0f0f0" stroke-width="1.200" stroke-dasharray="1.200 1"/><path d="M12 8.500 L12 19 L14.800 16.500 L19.500 16.300 Z" fill="#cfcfcf"/><path d="M22 20.5V23.5H19Z" fill="#d0d0d0" transform="translate(2,-3.500)"/></svg>
<svg class="abs" style="left:40px;top:226px;overflow:visible" width="22" height="22" viewBox="0 0 22 22"><rect x="3" y="2" width="4" height="17" fill="#cdcdcd"/><rect x="8" y="4.500" width="4" height="14.500" fill="#ababab"/><rect x="13" y="7.500" width="3" height="11.500" fill="#8a8a8a"/><path d="M3 7.500 H12 M3 12.500 H16" stroke="#484848" stroke-width="1"/><path d="M12.500 15.500 H19 M3 19.500 H20.500" stroke="#cfcfcf" stroke-width="1"/><path d="M3 17.500 H17" stroke="#484848" stroke-width="1"/><path d="M22 20.5V23.5H19Z" fill="#d0d0d0" transform="translate(2,-3.500)"/></svg>
<svg class="abs" style="left:10px;top:252px;overflow:visible" width="22" height="22" viewBox="0 0 22 22"><rect x="3.500" y="4.500" width="15" height="11" fill="#333" stroke="#cfcfcf"/><path d="M3.500 8.500 C8 5.500 12 11 18.500 7.500 M3.500 13 C8 9.500 13 14 18.500 11 M7 4.500 C11 8 6 12 9.500 15.500 M12 4.500 C16 8 11 12 15 15.500" fill="none" stroke="#cfcfcf" stroke-width="1"/></svg>
<svg class="abs" style="left:40px;top:252px;overflow:visible" width="22" height="22" viewBox="0 0 22 22"><defs><linearGradient id="gg" x1="0" x2="1"><stop offset="0" stop-color="#4a4a4a"/><stop offset="1" stop-color="#c8c8c8"/></linearGradient></defs><rect x="3.500" y="4.500" width="16" height="11.500" fill="url(#gg)" stroke="#cfcfcf"/></svg>
<svg class="abs" style="left:10px;top:276px;overflow:visible" width="22" height="22" viewBox="0 0 22 22"><path d="M14.500 2.500 C16.500 1 19.500 4 18 6 L15.500 8.500 L12 5 Z" fill="#d4d4d4"/><path d="M10.500 5 L15.500 10" stroke="#d4d4d4" stroke-width="2.200"/><path d="M12 7.500 L5 14.500 L4 17.500 L7 16.500 L14 9.500" fill="none" stroke="#d4d4d4" stroke-width="1.300"/><path d="M4 17.500 L2.500 19" stroke="#d4d4d4" stroke-width="1.200"/><path d="M22 20.5V23.5H19Z" fill="#d0d0d0" transform="translate(2,-3.500)"/></svg>
<svg class="abs" style="left:40px;top:276px;overflow:visible" width="22" height="22" viewBox="0 0 22 22"><rect x="3" y="3" width="9" height="9" fill="#a8a8a8"/><rect x="6.500" y="6" width="9" height="9" rx="2.500" fill="#8c8c8c" stroke="#6a6a6a" stroke-width="0.600"/><circle cx="15" cy="14.500" r="4.500" fill="#5a5a5a" stroke="#d4d4d4" stroke-width="1.200"/></svg>
<svg class="abs" style="left:10px;top:302px;overflow:visible" width="22" height="22" viewBox="0 0 22 22"><rect x="9.500" y="8.500" width="9" height="11" rx="1" fill="#6a6a6a" stroke="#cfcfcf"/><rect x="11.500" y="4" width="5" height="4" fill="#cfcfcf"/><rect x="12.500" y="2" width="3" height="2" fill="#cfcfcf"/><circle cx="14" cy="14" r="2.600" fill="#cfcfcf"/><circle cx="14" cy="14" r="1" fill="#484848"/><path d="M2 2.500 H3.500 M5 2.500 H6.500 M8 2.500 H9.500 M3.500 4.500 H5 M6.500 4.500 H8 M2 6.500 H3.500 M5 6.500 H6.500 M8 6.500 H9.500" stroke="#cfcfcf" stroke-width="1"/><path d="M22 20.5V23.5H19Z" fill="#d0d0d0" transform="translate(2,-3.500)"/></svg>
<svg class="abs" style="left:40px;top:302px;overflow:visible" width="22" height="22" viewBox="0 0 22 22"><path d="M3 19.500 H20" stroke="#cfcfcf"/><rect x="3.500" y="10.500" width="4" height="8.500" fill="#8c8c8c" stroke="#cfcfcf"/><rect x="9.500" y="3.500" width="4" height="15.500" fill="#cfcfcf" stroke="#cfcfcf"/><rect x="15.500" y="8.500" width="4" height="10.500" fill="#8c8c8c" stroke="#cfcfcf"/><path d="M22 20.5V23.5H19Z" fill="#d0d0d0" transform="translate(2,-3.500)"/></svg>
<svg class="abs" style="left:10px;top:328px;overflow:visible" width="22" height="22" viewBox="0 0 22 22"><rect x="5.500" y="6.500" width="12" height="9" fill="#8c8c8c" stroke="#cfcfcf"/><path d="M5.500 2 V5 M17.500 2 V5 M5.500 17 V20 M17.500 17 V20 M1 6.500 H4 M1 15.500 H4 M19 6.500 H22 M19 15.500 H22" stroke="#cfcfcf" stroke-width="1"/></svg>
<svg class="abs" style="left:40px;top:328px;overflow:visible" width="22" height="22" viewBox="0 0 22 22"><path d="M19 4 L11.500 5.500 L8 12 L15 10.500 Z" fill="#bdbdbd"/><path d="M8 12 L3.500 18.500 L5 17.500 L11 12.800 L10.500 11.500 Z" fill="#d8d8d8"/><path d="M22 20.5V23.5H19Z" fill="#d0d0d0" transform="translate(2,-3.500)"/></svg>
<svg class="abs" style="left:10px;top:351px;overflow:visible" width="22" height="22" viewBox="0 0 22 22"><path d="M6 13 V6 C6 4.600 8 4.600 8 6 V11 H8.600 V4 C8.600 2.600 10.600 2.600 10.600 4 V10.500 H11.200 V4 C11.200 2.600 13.200 2.600 13.200 4 V10.800 H13.800 V6 C13.800 4.600 15.800 4.600 15.800 6 V12 C16.500 10.500 18 9.500 19 10 C19.800 10.600 18 12.500 17 14.500 C16 16.800 15 18.500 13.500 19.500 H8.500 C6.500 18.500 4.500 14.500 3 12.800 C2 11.500 3.500 10.500 4.800 11.500 Z" fill="#c2c2c2"/><path d="M22 20.5V23.5H19Z" fill="#d0d0d0" transform="translate(2,-3.500)"/></svg>
<svg class="abs" style="left:40px;top:351px;overflow:visible" width="22" height="22" viewBox="0 0 22 22"><circle cx="9" cy="8.500" r="5.300" fill="#8c8c8c" stroke="#cfcfcf" stroke-width="1.600"/><path d="M13 12.500 L18.500 18" stroke="#cfcfcf" stroke-width="2.800" stroke-linecap="round"/></svg>
<div class="abs" style="left:24px;top:396px;width:36px;height:36px;background:#484848;border:1px solid #2a2a2a"></div>
<div class="abs" style="left:33px;top:405px;width:18px;height:18px;background:#484848;border:1px solid #2a2a2a"></div>
<div class="abs q" style="left:53px;top:398px">?</div><div class="abs q" style="left:26px;top:423px">?</div><div class="abs q" style="left:53px;top:423px">?</div>
<div class="abs" style="left:6px;top:378px;width:36px;height:36px;background:#484848;border:1px solid #2a2a2a;color:#e8e8e8;font-weight:bold;font-size:15px;line-height:33px;text-align:center">?</div>
<svg class="abs" style="left:49px;top:378px" width="12" height="12" viewBox="0 0 12 12"><path d="M3 1.500 C7 1.500 9 3.500 9 8" fill="none" stroke="#707070" stroke-width="1.300"/><path d="M3.500 0 L0.500 1.800 L3.500 3.800Z M6.800 7.500 L9 10.800 L11.200 7.500Z" fill="#707070"/></svg>
<svg class="abs" style="left:6px;top:420px" width="13" height="13" viewBox="0 0 13 13"><rect x="4.500" y="4.500" width="7" height="7" fill="#484848" stroke="#111" stroke-width="2"/><rect x="1" y="1" width="7" height="7" fill="#e8e8e8" stroke="#222" stroke-width="1"/></svg>
<div class="abs" style="left:7px;top:439px;width:59px;height:19px;background:#3a3a3a;border:1px solid #2c2c2c"></div>
<div class="abs" style="left:8px;top:440px;width:19px;height:17px;background:#2e2e2e"></div>
<div class="abs" style="left:11px;top:442px;width:13px;height:13px;background:#d8d8d8;border:1px solid #111"></div>
<div class="abs" style="left:30px;top:442px;width:13px;height:13px;background:linear-gradient(90deg,#fff,#222);border:1px solid #111"></div>
<svg class="abs" style="left:49px;top:442px" width="13" height="13" viewBox="0 0 13 13"><rect x="0.500" y="0.500" width="12" height="12" fill="#fff" stroke="#111"/><path d="M1 12 L12 1" stroke="#e01010" stroke-width="2.800"/></svg>
<div class="abs" style="left:7px;top:464px;width:59px;height:17px;background:#5a5a5a;border:1px solid #2c2c2c"></div>
<div class="abs" style="left:8px;top:465px;width:19px;height:15px;background:#2e2e2e"></div>
<svg class="abs" style="left:11px;top:467px" width="13" height="12" viewBox="0 0 13 12"><circle cx="5.500" cy="5" r="4" fill="#6a6a6a" stroke="#cfcfcf"/><rect x="6" y="5.500" width="6" height="6" fill="#d8d8d8"/></svg>
<svg class="abs" style="left:30px;top:466px" width="14" height="13" viewBox="0 0 14 13"><rect x="6" y="6" width="7" height="6.500" fill="#b8b8b8"/><circle cx="6" cy="5.500" r="4.500" fill="#777" stroke="#cfcfcf"/></svg>
<svg class="abs" style="left:49px;top:467px" width="12" height="11" viewBox="0 0 12 11"><circle cx="6" cy="5.500" r="4" fill="none" stroke="#7a7a7a"/><rect x="6" y="5.500" width="4" height="4" fill="#7a7a7a"/></svg>
<svg class="abs" style="left:23px;top:489px" width="24" height="19" viewBox="0 0 24 19"><rect x="1.500" y="6.500" width="14" height="10" fill="#5a5a5a" stroke="#d4d4d4"/><rect x="2" y="7" width="13" height="2" fill="#d4d4d4"/><rect x="7.500" y="1.500" width="15" height="11" fill="#5e5e5e" stroke="#d4d4d4"/><rect x="8" y="2" width="14" height="2" fill="#d4d4d4"/></svg>
<div class="abs" style="left:0;top:513px;width:71px;height:145px;background:#474747"></div>
</div>
<div id="dock" class="abs">
<div class="abs" style="left:0;top:0;width:37px;height:12px;background:#2f2f2f;border-bottom:1px solid #262626"></div>
<svg class="abs" style="left:26px;top:2px" width="8" height="7" viewBox="0 0 8 7"><path d="M3.500 0V7L0 3.500ZM7.500 0V7L4 3.500Z" fill="#d0d0d0"/></svg>
<div class="abs" style="left:9px;top:15px;width:20px;height:4px;background:repeating-linear-gradient(90deg,#222 0 1px,transparent 1px 2px)"></div>
<svg class="abs" style="left:10px;top:26px" width="19" height="18" viewBox="0 0 19 18"><path d="M1.500 17.500 V1 A17 17 0 0 1 18.500 17.500 Z" fill="#a8a8a8" stroke="#e0e0e0" stroke-width="1"/><path d="M2 17 L2 1.500 A16 16 0 0 1 8 2.800 Z" fill="#e4e4e4"/><path d="M2 17 L8 2.800 A16 16 0 0 1 13.300 6.200 Z" fill="#bcbcbc"/><path d="M2 17 L13.300 6.200 A16 16 0 0 1 16.800 11.500 Z" fill="#909090"/><path d="M2 17 L16.800 11.500 A16 16 0 0 1 18 17 Z" fill="#686868"/></svg>
<svg class="abs" style="left:10px;top:52px" width="19" height="22" viewBox="0 0 19 22"><circle cx="8" cy="11" r="5.300" fill="none" stroke="#cfcfcf" stroke-width="1.500"/><circle cx="8" cy="11" r="2.200" fill="#cfcfcf"/><path d="M8 11 L15.500 3.500 M8 11 L15.500 18.500" stroke="#cfcfcf" stroke-width="1.500"/><circle cx="15.800" cy="3.300" r="2.400" fill="#e0e0e0"/><circle cx="15.800" cy="18.700" r="2.400" fill="#e0e0e0"/></svg>
<div class="abs" style="left:0;top:80px;width:37px;height:1px;background:#2e2e2e"></div><div class="abs" style="left:0;top:81px;width:37px;height:1px;background:#555"></div>
<div class="abs" style="left:9px;top:84px;width:20px;height:4px;background:repeating-linear-gradient(90deg,#222 0 1px,transparent 1px 2px)"></div>
<svg class="abs" style="left:11px;top:99px" width="16" height="11" viewBox="0 0 16 11"><rect x="0" y="0" width="16" height="11" fill="#c8c8c8"/><rect x="1" y="1" width="4" height="4" fill="#2a2a2a"/><rect x="6" y="1" width="4" height="4" fill="#555"/><rect x="11" y="1" width="4" height="4" fill="#9a9a9a"/><rect x="1" y="6" width="4" height="4" fill="#888"/><rect x="6" y="6" width="4" height="4" fill="#666"/><rect x="11" y="6" width="4" height="4" fill="#3a3a3a"/></svg>
<svg class="abs" style="left:11px;top:121px" width="18" height="22" viewBox="0 0 18 22"><rect x="5" y="13" width="8" height="8.500" fill="#bdbdbd"/><path d="M7 12.500 L2.500 7 C1 4.500 2 2.500 3.500 4 C5.500 6 7.500 9 8.500 12.500Z" fill="#c4c4c4"/><path d="M8.300 12.500 V3.500 C8.300 1.500 10.300 1.500 10.300 3.500 V12.500Z" fill="#d0d0d0"/><path d="M10.800 12.500 L12 8.500 C11 6.500 13 4 16.500 5.500 C16.500 8 14.500 9 13 9 L12.300 12.500Z" fill="#c4c4c4"/></svg>
<svg class="abs" style="left:10px;top:151px" width="19" height="20" viewBox="0 0 19 20"><circle cx="9.500" cy="5.500" r="4.200" fill="#cfcfcf"/><circle cx="5" cy="11.500" r="4.200" fill="#cfcfcf"/><circle cx="14" cy="11.500" r="4.200" fill="#cfcfcf"/><path d="M8.500 9 H10.500 L10.800 16 L14 18.500 H5 L8.200 16Z" fill="#cfcfcf"/></svg>
<div class="abs" style="left:0;top:177px;width:37px;height:1px;background:#2e2e2e"></div><div class="abs" style="left:0;top:178px;width:37px;height:1px;background:#555"></div>
<div class="abs" style="left:9px;top:181px;width:20px;height:4px;background:repeating-linear-gradient(90deg,#222 0 1px,transparent 1px 2px)"></div>
<div class="abs" style="left:11px;top:195px;width:18px;height:1px;background:#cfcfcf"></div><div class="abs" style="left:11px;top:199px;width:18px;height:2px;background:#cfcfcf"></div>
<div class="abs" style="left:-1px;top:204px;width:38px;height:13px;background:#303030;border-radius:4px 0 0 0;border-top:1px solid #555;border-left:1px solid #555"></div><svg class="abs" style="left:9px;top:208px" width="8" height="6" viewBox="0 0 8 6"><path d="M0 0V6L3.500 3ZM4 0V6L7.500 3Z" fill="#e0e0e0"/></svg><svg class="abs" style="left:26px;top:208px" width="7" height="6" viewBox="0 0 7 6"><path d="M0.500 0.300L6.500 5.700M6.500 0.300L0.500 5.700" stroke="#e8e8e8" stroke-width="1.500"/></svg>
<div class="abs" style="left:9px;top:220px;width:20px;height:4px;background:repeating-linear-gradient(90deg,#222 0 1px,transparent 1px 2px)"></div>
<svg class="abs" style="left:10px;top:234px" width="19" height="13" viewBox="0 0 19 13"><defs><linearGradient id="g2" x1="0" x2="1"><stop offset="0" stop-color="#d0d0d0"/><stop offset="1" stop-color="#3c3c3c"/></linearGradient></defs><rect x="0.500" y="0.500" width="18" height="12" fill="url(#g2)" stroke="#d4d4d4"/></svg>
<div class="abs" style="left:0;top:257px;width:37px;height:1px;background:#2e2e2e"></div><div class="abs" style="left:0;top:258px;width:37px;height:1px;background:#555"></div>
<svg class="abs" style="left:10px;top:262px" width="19" height="19" viewBox="0 0 19 19"><circle cx="9.500" cy="9.500" r="8" fill="none" stroke="#cfcfcf" stroke-width="1.100" stroke-dasharray="2.200 1.600"/><circle cx="9.500" cy="9.500" r="5.500" fill="#bcbcbc"/></svg>
<svg class="abs" style="left:10px;top:290px" width="19" height="18" viewBox="0 0 19 18"><rect x="4.500" y="1.500" width="13" height="13" fill="none" stroke="#cfcfcf"/><rect x="0.500" y="8.500" width="5" height="5" fill="#484848" stroke="#cfcfcf"/><rect x="3.500" y="11.500" width="5" height="5" fill="#8c8c8c" stroke="#cfcfcf"/></svg>
<div class="abs" style="left:0;top:315px;width:37px;height:1px;background:#2e2e2e"></div><div class="abs" style="left:0;top:316px;width:37px;height:1px;background:#555"></div>
<div class="abs" style="left:9px;top:319px;width:20px;height:4px;background:repeating-linear-gradient(90deg,#222 0 1px,transparent 1px 2px)"></div>
<svg class="abs" style="left:10px;top:330px" width="19" height="19" viewBox="0 0 19 19"><rect x="0.500" y="0.500" width="11" height="12" fill="#484848" stroke="#cfcfcf"/><rect x="5.500" y="6.500" width="12" height="11" fill="#484848" stroke="#cfcfcf"/></svg>
<div class="abs" style="left:0;top:356px;width:37px;height:1px;background:#2e2e2e"></div><div class="abs" style="left:0;top:357px;width:37px;height:1px;background:#555"></div>
<div class="abs" style="left:-1px;top:407px;width:38px;height:13px;background:#303030;border-radius:4px 0 0 0;border-top:1px solid #555;border-left:1px solid #555"></div><svg class="abs" style="left:9px;top:411px" width="8" height="6" viewBox="0 0 8 6"><path d="M0 0V6L3.500 3ZM4 0V6L7.500 3Z" fill="#e0e0e0"/></svg><svg class="abs" style="left:26px;top:411px" width="7" height="6" viewBox="0 0 7 6"><path d="M0.500 0.300L6.500 5.700M6.500 0.300L0.500 5.700" stroke="#e8e8e8" stroke-width="1.500"/></svg>
<div class="abs" style="left:9px;top:423px;width:20px;height:4px;background:repeating-linear-gradient(90deg,#222 0 1px,transparent 1px 2px)"></div>
<svg class="abs" style="left:10px;top:434px" width="19" height="19" viewBox="0 0 19 19"><defs><linearGradient id="g3" x1="0" x2="0" y1="0" y2="1"><stop offset="0" stop-color="#e4e4e4"/><stop offset="1" stop-color="#9a9a9a"/></linearGradient></defs><path d="M9.500 7.500 L18.500 12.200 L9.500 17.500 L0.500 12.200Z" fill="#a8a8a8"/><path d="M9.500 9 L18.500 13 L9.500 18.500 L0.500 13Z" fill="#484848" transform="translate(0,-3)"/><path d="M9.500 0.500 L18.500 5.500 L9.500 11 L0.500 5.500Z" fill="url(#g3)"/></svg>
<svg class="abs" style="left:8px;top:463px" width="23" height="17" viewBox="0 0 23 17"><path d="M6.500 15.500 C2.500 15.500 0.800 12.500 1 10.500 C1.200 8 3 6.300 5.500 6.300 C6.500 3 9.500 1 12.500 1.200 C16 1.500 18 4 18.300 6.500 C20.500 7 22 9 22 11.200 C22 13.500 20 15.500 17.500 15.500Z" fill="#bdbdbd" stroke="#d8d8d8" stroke-width="1"/><path d="M7 12.500 C4.500 12.500 4.500 9 7 9 C9 9 10 10.500 11.500 11.500 C13 12.500 14.500 13 16 13 C18.500 13 18.500 9 16 9 C14.500 9 13.500 9.800 12.500 10.500" fill="none" stroke="#484848" stroke-width="1.500"/></svg>
<div class="abs" style="left:0;top:487px;width:37px;height:1px;background:#2e2e2e"></div><div class="abs" style="left:0;top:488px;width:37px;height:1px;background:#555"></div>
</div>
<!-- OBJECT MENU -->
<div id="menu" class="abs">
<div class="it" style="top:3px"><span style="letter-spacing:-0.19px">Transform</span><svg class="ar" viewBox="0 0 6 10"><path d="M1 1.500 L5 5 L1 8.500" fill="none" stroke="#333" stroke-width="1.150"/></svg></div>
<div class="it" style="top:25px"><span style="letter-spacing:-0.17px">Arrange</span><svg class="ar" viewBox="0 0 6 10"><path d="M1 1.500 L5 5 L1 8.500" fill="none" stroke="#333" stroke-width="1.150"/></svg></div>
<div class="sep" style="top:50px"></div>
<div class="it" style="top:54px"><span style="letter-spacing:-0.17px">Group</span><span class="sc" style="letter-spacing:-0.16px">Ctrl+G</span></div>
<div class="it dis" style="top:76px"><span style="letter-spacing:-0.02px">Ungroup</span><span class="sc" style="letter-spacing:-0.09px">Shift+Ctrl+G</span></div>
<div class="it" style="top:98px"><span style="letter-spacing:-0.10px">Lock</span><svg class="ar" viewBox="0 0 6 10"><path d="M1 1.500 L5 5 L1 8.500" fill="none" stroke="#333" stroke-width="1.150"/></svg></div>
<div class="it dis" style="top:120px"><span style="letter-spacing:-0.01px">Unlock All</span><span class="sc" style="letter-spacing:0.09px">Alt+Ctrl+2</span></div>
<div class="it" style="top:142px"><span style="letter-spacing:0.08px">Hide</span><svg class="ar" viewBox="0 0 6 10"><path d="M1 1.500 L5 5 L1 8.500" fill="none" stroke="#333" stroke-width="1.150"/></svg></div>
<div class="it dis" style="top:164px"><span style="letter-spacing:-0.15px">Show All</span><span class="sc" style="letter-spacing:0.09px">Alt+Ctrl+3</span></div>
<div class="sep" style="top:189px"></div>
<div class="it dis" style="top:193px"><span style="letter-spacing:-0.55px">Expand...</span></div>
<div class="it hl" style="top:215px"><span style="letter-spacing:-0.41px">Expand Appearance</span></div>
<div class="it" style="top:237px"><span style="letter-spacing:-0.62px">Rasterize...</span></div>
<div class="it" style="top:259px"><span style="letter-spacing:-0.40px">Create Gradient Mesh...</span></div>
<div class="it dis" style="top:281px"><span style="letter-spacing:-0.32px">Create Object Mosaic...</span></div>
<div class="it" style="top:303px"><span style="letter-spacing:-0.34px">Flatten Transparency...</span></div>
<div class="sep" style="top:328px"></div>
<div class="it" style="top:332px"><span style="letter-spacing:-0.43px">Slice</span><svg class="ar" viewBox="0 0 6 10"><path d="M1 1.500 L5 5 L1 8.500" fill="none" stroke="#333" stroke-width="1.150"/></svg></div>
<div class="it" style="top:354px"><span style="letter-spacing:-0.32px">Create Trim Marks</span></div>
<div class="sep" style="top:379px"></div>
<div class="it" style="top:383px"><span style="letter-spacing:-0.40px">Path</span><svg class="ar" viewBox="0 0 6 10"><path d="M1 1.500 L5 5 L1 8.500" fill="none" stroke="#333" stroke-width="1.150"/></svg></div>
<div class="it" style="top:405px"><span style="letter-spacing:-0.63px">Shape</span><svg class="ar" viewBox="0 0 6 10"><path d="M1 1.500 L5 5 L1 8.500" fill="none" stroke="#333" stroke-width="1.150"/></svg></div>
<div class="it" style="top:427px"><span style="letter-spacing:-0.32px">Pattern</span><svg class="ar" viewBox="0 0 6 10"><path d="M1 1.500 L5 5 L1 8.500" fill="none" stroke="#333" stroke-width="1.150"/></svg></div>
<div class="it" style="top:449px"><span style="letter-spacing:-0.34px">Blend</span><svg class="ar" viewBox="0 0 6 10"><path d="M1 1.500 L5 5 L1 8.500" fill="none" stroke="#333" stroke-width="1.150"/></svg></div>
<div class="it" style="top:471px"><span style="letter-spacing:-0.28px">Envelope Distort</span><svg class="ar" viewBox="0 0 6 10"><path d="M1 1.500 L5 5 L1 8.500" fill="none" stroke="#333" stroke-width="1.150"/></svg></div>
<div class="it" style="top:493px"><span style="letter-spacing:-0.40px">Perspective</span><svg class="ar" viewBox="0 0 6 10"><path d="M1 1.500 L5 5 L1 8.500" fill="none" stroke="#333" stroke-width="1.150"/></svg></div>
<div class="it" style="top:515px"><span style="letter-spacing:-0.28px">Live Paint</span><svg class="ar" viewBox="0 0 6 10"><path d="M1 1.500 L5 5 L1 8.500" fill="none" stroke="#333" stroke-width="1.150"/></svg></div>
<div class="it" style="top:537px"><span style="letter-spacing:-0.38px">Image Trace</span><svg class="ar" viewBox="0 0 6 10"><path d="M1 1.500 L5 5 L1 8.500" fill="none" stroke="#333" stroke-width="1.150"/></svg></div>
<div class="it" style="top:559px"><span style="letter-spacing:-0.35px">Text Wrap</span><svg class="ar" viewBox="0 0 6 10"><path d="M1 1.500 L5 5 L1 8.500" fill="none" stroke="#333" stroke-width="1.150"/></svg></div>
<div class="it" style="top:581px"><span style="letter-spacing:-0.25px">Line and Sketch Art</span><svg class="ar" viewBox="0 0 6 10"><path d="M1 1.500 L5 5 L1 8.500" fill="none" stroke="#333" stroke-width="1.150"/></svg></div>
<div class="sep" style="top:606px"></div>
<div class="it" style="top:610px"><span style="letter-spacing:-0.09px">Clipping Mask</span><svg class="ar" viewBox="0 0 6 10"><path d="M1 1.500 L5 5 L1 8.500" fill="none" stroke="#333" stroke-width="1.150"/></svg></div>
<div class="it" style="top:632px"><span style="letter-spacing:-0.11px">Compound Path</span><svg class="ar" viewBox="0 0 6 10"><path d="M1 1.500 L5 5 L1 8.500" fill="none" stroke="#333" stroke-width="1.150"/></svg></div>
<div class="it" style="top:654px"><span style="letter-spacing:-0.11px">Artboards</span><svg class="ar" viewBox="0 0 6 10"><path d="M1 1.500 L5 5 L1 8.500" fill="none" stroke="#333" stroke-width="1.150"/></svg></div>
<div class="it" style="top:676px"><span style="letter-spacing:-0.45px">Graph</span><svg class="ar" viewBox="0 0 6 10"><path d="M1 1.500 L5 5 L1 8.500" fill="none" stroke="#333" stroke-width="1.150"/></svg></div>
</div>
</body>
</html>
